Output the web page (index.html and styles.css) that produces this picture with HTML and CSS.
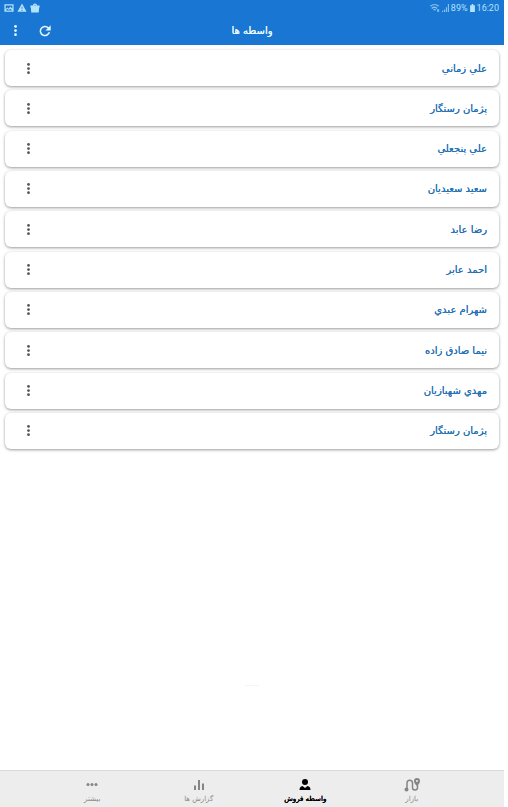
FILE: index.html
```
<!DOCTYPE html>
<html lang="fa" dir="rtl">
<head>
    <meta charset="UTF-8">
    <meta name="viewport" content="width=device-width, initial-scale=1.0">
    <title>واسطه ها</title>
    <link rel="stylesheet" href="styles.css">
</head>
<body>

<svg class="sprite" aria-hidden="true">
    <symbol id="dots" viewBox="0 0 24 24">
        <circle cx="12" cy="3" r="3"/><circle cx="12" cy="12" r="3"/><circle cx="12" cy="21" r="3"/>
    </symbol>
</svg>

<header>
    <div class="status-bar" dir="ltr">
        <div class="status-group">
            <svg viewBox="0 0 24 24"><path fill-rule="evenodd" d="M1 3h22v18H1zM4 6v9l4-4 3 3 4-5 5 4V6zM4 18h16l-5-4-3 3-4-3z"/></svg>
            <svg viewBox="0 0 24 24"><path fill-rule="evenodd" d="M12 1l11 20H1zM11 9v5h2V9zM11 16v3h2v-3z"/></svg>
            <svg viewBox="0 0 24 24"><path fill-rule="evenodd" d="M7 6a5 5 0 0 1 10 0h6v5h-1l-1 12H3L2 11H1V6zM10 6h4a2 2 0 0 0-4 0z"/></svg>
        </div>
        <div class="status-group status-right">
            <svg class="faint" viewBox="0 0 24 24"><path class="line wifi" d="M1 8a15 15 0 0 1 20 0M4 13a10 10 0 0 1 13 0M8 17a5 5 0 0 1 6 0"/><path d="M17 15h5v6h-5z"/></svg>
            <svg class="signal faint" viewBox="0 0 18 24"><path d="M0 19h3v3H0zM5 16h3v6H5zM10 10h3v12h-3zM15 2h3v20h-3z"/></svg>
            <span>89%</span>
            <svg class="battery" viewBox="0 0 12 20"><path d="M4 0h4v3h4v17H0V3h4z"/></svg>
            <span>16:20</span>
        </div>
    </div>
    <div class="toolbar">
        <h1>واسطه ها</h1>
        <div class="actions">
            <button type="button" aria-label="بارگذاری مجدد">
                <svg viewBox="0 0 24 24"><path d="M17.65 6.35A8 8 0 1 0 19.73 14h-2.5A5.7 5.7 0 1 1 16 8l-3.2 3.2H20.500V3.500z"/></svg>
            </button>
            <button type="button" aria-label="منو">
                <svg class="menu-icon"><use href="#dots"/></svg>
            </button>
        </div>
    </div>
</header>

<main>
    <ul class="list">
        <li class="card"><a href="#">علي زماني</a><button type="button" aria-label="گزینه ها"><svg><use href="#dots"/></svg></button></li>
        <li class="card"><a href="#">پژمان رستگار</a><button type="button" aria-label="گزینه ها"><svg><use href="#dots"/></svg></button></li>
        <li class="card"><a href="#">علي پنجعلي</a><button type="button" aria-label="گزینه ها"><svg><use href="#dots"/></svg></button></li>
        <li class="card"><a href="#">سعيد سعيديان</a><button type="button" aria-label="گزینه ها"><svg><use href="#dots"/></svg></button></li>
        <li class="card"><a href="#">رضا عابد</a><button type="button" aria-label="گزینه ها"><svg><use href="#dots"/></svg></button></li>
        <li class="card"><a href="#">احمد عابر</a><button type="button" aria-label="گزینه ها"><svg><use href="#dots"/></svg></button></li>
        <li class="card"><a href="#">شهرام عبدي</a><button type="button" aria-label="گزینه ها"><svg><use href="#dots"/></svg></button></li>
        <li class="card"><a href="#">نيما صادق زاده</a><button type="button" aria-label="گزینه ها"><svg><use href="#dots"/></svg></button></li>
        <li class="card"><a href="#">مهدي شهبازيان</a><button type="button" aria-label="گزینه ها"><svg><use href="#dots"/></svg></button></li>
        <li class="card"><a href="#">پژمان رستگار</a><button type="button" aria-label="گزینه ها"><svg><use href="#dots"/></svg></button></li>
    </ul>
    <div class="hint"></div>
</main>

<footer>
    <nav>
        <a href="#">
            <svg viewBox="0 0 32 28"><path class="line route" d="M6 20V10a5.500 5.500 0 0 1 11 0v9a5 5 0 0 0 10 0v-5"/><circle cx="5" cy="23" r="4"/><path fill-rule="evenodd" d="M26 0a6 6 0 0 1 6 6c0 5-6 10-6 10s-6-5-6-10a6 6 0 0 1 6-6zM26 4a2 2 0 1 0 0 4 2 2 0 0 0 0-4z"/></svg>
            <span>بازار</span>
        </a>
        <a href="#" class="active">
            <svg viewBox="0 0 32 28"><circle cx="16" cy="8" r="6"/><path d="M5 24c0-5 2-7 6-8l5 4 5-4c4 1 6 3 6 8z"/></svg>
            <span>واسطه فروش</span>
        </a>
        <a href="#">
            <svg viewBox="0 0 32 28"><path d="M6 15h4v9H6zM14 4h4v20h-4zM22 11h4v13h-4z"/></svg>
            <span>گزارش ها</span>
        </a>
        <a href="#">
            <svg viewBox="0 0 32 28"><circle cx="8" cy="13" r="3"/><circle cx="16" cy="13" r="3"/><circle cx="24" cy="13" r="3"/></svg>
            <span>بيشتر</span>
        </a>
    </nav>
</footer>

</body>
</html>
```
FILE: styles.css
```
/* Global Styles */
* {
    box-sizing: border-box;
    margin: 0;
    padding: 0;
}
body {
    display: flex;
    flex-direction: column;
    min-height: 100vh;
    padding-right: 4px;
    background-color: #fff;
    color: #2472b5;
    font-family: 'DejaVu Sans', sans-serif;
    font-size: 10px;
}
a {
    text-decoration: none;
    color: inherit;
}
button {
    display: flex;
    align-items: center;
    justify-content: center;
    border: none;
    background: none;
    color: inherit;
    cursor: pointer;
}
svg {
    display: block;
    fill: currentColor;
}
.line {
    fill: none;
    stroke: currentColor;
    stroke-width: 2;
}
.wifi,
.route {
    stroke-width: 3;
}
.sprite {
    display: none;
}

/* Header */
header {
    background-color: #1976d2;
    color: #e8f8ff;
}
.status-bar {
    display: flex;
    justify-content: space-between;
    height: 16px;
    padding: 0 5px 0 4px;
    color: #b3e2fb;
    font-family: Roboto, sans-serif;
    font-size: 9px;
}
.status-group {
    display: flex;
    align-items: center;
    gap: 3px;
}
.status-group svg {
    width: 10px;
    height: 10px;
}
.status-right {
    gap: 2px;
}
.status-right .signal {
    width: 7px;
}
.status-right .battery {
    width: 5px;
    height: 8px;
}
.faint {
    opacity: 0.7;
}
.toolbar {
    display: grid;
    grid-template-columns: 1fr auto 1fr;
    align-items: center;
    height: 29px;
    padding: 0 5px;
}
h1 {
    grid-column: 2;
    font-size: 10px;
    font-weight: 400;
    text-shadow: 0 0 currentColor;
}
.actions {
    display: flex;
    justify-content: flex-end;
    gap: 10px;
}
.actions button {
    width: 20px;
    height: 24px;
}
.actions svg {
    width: 16px;
    height: 16px;
}
.actions .menu-icon {
    width: 11px;
    height: 11px;
}

/* List */
main {
    flex: 1;
    padding: 5px;
}
.list {
    display: flex;
    flex-direction: column;
    justify-content: space-between;
    min-height: 399px;
    list-style: none;
}
.card {
    display: flex;
    align-items: center;
    justify-content: space-between;
    height: 36px;
    padding: 0 12px;
    border-radius: 6px;
    background-color: #fff;
    box-shadow: 0 1px 3px rgba(0, 0, 0, 0.4);
}
.card a {
    text-shadow: 0 0 currentColor;
}
.card button {
    width: 22px;
    height: 24px;
    color: #555;
}
.card svg {
    width: 11px;
    height: 11px;
}
.hint {
    width: 14px;
    height: 1px;
    margin: 236px auto 0;
    background-color: #f5f5f5;
}

/* Bottom Navigation */
footer {
    border-top: 1px solid #dadada;
    background-color: #ededed;
}
nav {
    display: flex;
    max-width: 426px;
    height: 36px;
    margin: 0 auto;
}
nav a {
    display: flex;
    flex: 1;
    flex-direction: column;
    align-items: center;
    padding-top: 7px;
    color: #858585;
    font-size: 7px;
    line-height: 14px;
}
nav svg {
    width: 16px;
    height: 14px;
}
nav .active {
    color: #000;
    text-shadow: 0 0 currentColor, 0 0 currentColor;
}
```
